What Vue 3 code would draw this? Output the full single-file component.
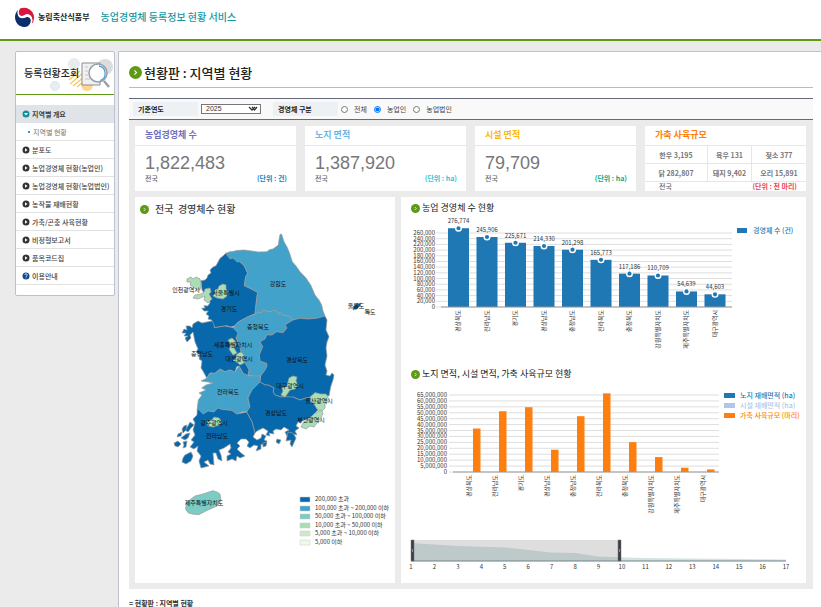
<template>
  <div class="page">
    <header class="top">
      <a href="#" class="logo">
        <svg class="emblem" viewBox="0 0 20 20">
          <path d="M5 1.500A10 10 0 0 1 16.500 17.300C18.500 13 17 9.300 13.500 8.300C10 7.300 9 10 6.300 9.600C3.500 9.200 2.600 6 4 3.500C4.300 2.800 4.600 2.100 5 1.500Z" fill="#d9163f" />
          <path d="M3.200 2.700C1.500 6 3 10.800 6.800 11.300C10 11.600 10.800 9.300 13.500 10.300C17 11.600 16.500 16.500 12.300 19.600C5.500 21.500 0 16.500 0 10C0 7 1.300 4.500 3.200 2.700Z" fill="#0b2f6b" />
          <path d="M5 1.500C2.500 5 4 9 7 9C9.500 9 10.500 6.300 13.500 7.300C17.500 8.600 18.500 13.500 16 17.500L14.500 18.600C17.300 14.500 16.500 11 13.300 9.900C10.500 9 9.600 11.400 6.700 11C3.200 10.400 1.700 6 3.500 2.500Z" fill="#fff" />
        </svg>
        <span>농림축산식품부</span>
      </a>
      <a href="#" class="service">농업경영체 등록정보 현황 서비스</a>
    </header>

    <div class="body">
      <aside class="side">
        <div class="side-head">
          <h1>등록현황조회</h1>
          <svg class="side-art" viewBox="0 0 64 38">
            <circle cx="24" cy="8" r="6" fill="#e8ecef" />
            <circle cx="55" cy="11" r="8" fill="#dcdcdc" />
            <circle cx="5" cy="30" r="4.500" fill="#e6eef2" stroke="#dbe6ec" />
            <path d="M20 20l6-5M19 24l11-9M20 28l13-11M23 30l11-9M27 31l7-6" stroke="#fbc65b" stroke-width="1.300" />
            <circle cx="37" cy="29" r="6" fill="#ffd58a" />
            <path d="M32 7h18v22h-18z" fill="#f1f1f1" stroke="#8b8d90" />
            <path d="M35 11h3M35 15h3M35 19h3M35 23h5" stroke="#c4c4c4" />
            <circle cx="48" cy="17" r="9" fill="#fff" stroke="#9b9ea3" stroke-width="1.500" />
            <path d="M49 10a7.500 7.500 0 0 1 1 14.500" fill="none" stroke="#4ba3dc" stroke-width="1.300" />
            <path d="M54 25l5 6" stroke="#9b9ea3" stroke-width="2.500" />
          </svg>
        </div>
        <nav>
          <ul class="menu">
            <li v-for="item in menu" :key="item.text" :class="item.type">
              <a href="#">
                <svg v-if="item.type !== 'sub'" class="bullet" viewBox="0 0 8 8">
                  <circle cx="4" cy="4" r="3.500" :fill="bulletColor[item.type]" />
                  <path v-if="item.type === 'active'" d="M2 3h4L4 5.500z" fill="#fff" />
                  <path v-else-if="item.type === 'normal'" d="M3 2.200v3.600L5.500 4z" fill="#fff" />
                  <path v-else d="M2.800 3a1.200 1.200 0 1 1 1.600 1.100L4 4.800M4 5.600v.8" fill="none" stroke="#fff" stroke-width=".8" />
                </svg>
                <i v-else class="dot"></i>
                {{ item.text }}
              </a>
            </li>
          </ul>
        </nav>
      </aside>

      <main class="main">
        <h2 class="title">
          <svg class="arrow big" viewBox="0 0 12 12"><circle cx="6" cy="6" r="6" fill="#5f9a13" /><path d="M5 4l2 2-2 2" fill="none" stroke="#fff" /></svg>
          현황판 : 지역별 현황
        </h2>

        <form class="filter" @submit.prevent>
          <label class="tag" for="year">기준연도</label>
          <div class="select-wrap">
            <select id="year" v-model="year">
              <option>2025</option>
              <option>2024</option>
            </select>
            <svg viewBox="0 0 10 6"><path d="M1 1l3 3 3-3M4 1l2.500 3L9 1" fill="none" stroke="#333" stroke-width="1.300" /></svg>
          </div>
          <span id="kind" class="tag second">경영체 구분</span>
          <div class="radios" role="radiogroup" aria-labelledby="kind">
            <label v-for="k in kinds" :key="k">
              <input type="radio" name="kind" :value="k" v-model="kind" />{{ k }}
            </label>
          </div>
        </form>

        <div class="board">
          <div class="cards">
            <section v-for="c in cards" :key="c.name" class="card" :class="c.cls">
              <h3>{{ c.name }}</h3>
              <div class="card-body">
                <strong>{{ c.value }}</strong>
                <p><span>전국</span><b>{{ c.unit }}</b></p>
              </div>
            </section>
            <section class="card livestock">
              <h3>가축 사육규모</h3>
              <table>
                <tbody>
                  <tr v-for="(row, i) in livestock" :key="i">
                    <td v-for="cell in row" :key="cell">{{ cell }}</td>
                  </tr>
                </tbody>
              </table>
              <p><span>전국</span><b>(단위 : 천 마리)</b></p>
            </section>
          </div>

          <div class="panels">
            <section class="panel">
              <h3 class="map-title">
                <svg class="arrow" viewBox="0 0 12 12"><circle cx="6" cy="6" r="6" fill="#5f9a13" /><path d="M5 4l2 2-2 2" fill="none" stroke="#fff" /></svg>
                전국&nbsp; 경영체수 현황
              </h3>
              <svg class="chart" viewBox="135 221 260 356">
                <path v-for="(r, i) in regions" :key="i" :d="r.d" :fill="r.fill" stroke="#999" stroke-width=".7" stroke-linejoin="round" />
                <text v-for="l in mapLabels" :key="l[0]" :x="l[1]" :y="l[2]" class="map-label">{{ l[0] }}</text>
                <g v-for="(l, i) in mapLegend" :key="l.text">
                  <rect x="300" :y="497 + Math.round(i * 8.5)" width="10" height="5" :fill="l.color" stroke="#ccc" stroke-width=".5" />
                  <text x="315" :y="501 + Math.round(i * 8.5)" class="tick">{{ l.text }}</text>
                </g>
              </svg>
            </section>

            <section class="panel right">
              <h3>
                <svg class="arrow" viewBox="0 0 12 12"><circle cx="6" cy="6" r="6" fill="#5f9a13" /><path d="M5 4l2 2-2 2" fill="none" stroke="#fff" /></svg>
                농업 경영체 수 현황
              </h3>
              <svg class="chart" viewBox="401 217 405 146">
                <g v-for="n in 14" :key="n">
                  <line x1="436" x2="732" :y1="y1((n - 1) * 20000)" :y2="y1((n - 1) * 20000)" stroke="#dedede" />
                  <text x="435" :y="y1((n - 1) * 20000) + 2" class="tick end">{{ ((n - 1) * 20000).toLocaleString('en-US') }}</text>
                </g>
                <g v-for="(v, i) in counts" :key="i">
                  <rect :x="448 + i * 28.5" :y="y1(v)" width="21" :height="307 - y1(v)" fill="#1f77b4" />
                  <circle :cx="458.5 + i * 28.5" :cy="y1(v)" r="2.800" fill="#1f77b4" stroke="#fff" stroke-width="1.400" />
                  <text :x="458.5 + i * 28.5" :y="y1(v) - 5" class="tick mid">{{ v.toLocaleString('en-US') }}</text>
                  <text :transform="`translate(${460 + i * 28.5} 310) rotate(-90)`" class="tick end">{{ names[i] }}</text>
                </g>
                <line x1="441" x2="732" y1="307" y2="307" stroke="#999" />
                <rect x="737" y="228" width="10" height="5" fill="#1f77b4" />
                <text x="753" y="233" class="legend" fill="#1f77b4">경영체 수 (건)</text>
              </svg>

              <h3>
                <svg class="arrow" viewBox="0 0 12 12"><circle cx="6" cy="6" r="6" fill="#5f9a13" /><path d="M5 4l2 2-2 2" fill="none" stroke="#fff" /></svg>
                노지 면적, 시설 면적, 가축 사육규모 현황
              </h3>
              <svg class="chart" viewBox="401 383 405 194">
                <g v-for="n in 14" :key="n">
                  <line x1="449" x2="719" :y1="y2((n - 1) * 5)" :y2="y2((n - 1) * 5)" stroke="#dedede" />
                  <text x="447" :y="y2((n - 1) * 5) + 2" class="tick end">{{ ((n - 1) * 5000000).toLocaleString('en-US') }}</text>
                </g>
                <g v-for="(v, i) in animals" :key="i">
                  <rect :x="473 + i * 26" :y="y2(v)" width="7.500" :height="472 - y2(v)" fill="#ff7f0e" />
                  <text :transform="`translate(${471 + i * 26} 475) rotate(-90)`" class="tick end">{{ names[i] }}</text>
                </g>
                <line x1="453" x2="719" y1="472" y2="472" stroke="#999" />
                <g v-for="(l, i) in areaLegend" :key="l.text">
                  <rect x="724" :y="393 + i * 10" width="11" height="5" :fill="l.color" />
                  <text x="740" :y="398 + i * 10" class="legend" :fill="l.color">{{ l.text }}</text>
                </g>

                <path d="M411 543L434 544.500L458 546L505 547.500L529 550L550 552.500L575 553L598 556.500L645 558L692 558.500L786 559.500V561H411Z" fill="#d3e3e4" />
                <rect x="411" y="540" width="210" height="21" fill="#888" fill-opacity=".28" />
                <path d="M411 561H786" stroke="#6f8084" />
                <g v-for="x in [411, 618]" :key="x">
                  <rect :x="x" y="540" width="3" height="21" fill="#3c3f4a" stroke="#777" stroke-width=".5" />
                  <path :d="`M${x + 1.5} 549v3`" stroke="#bbb" stroke-width=".6" />
                </g>
                <text v-for="n in 17" :key="n" :x="411 + (n - 1) * 23.44" y="569" class="tick mid">{{ n }}</text>
              </svg>
            </section>
          </div>
        </div>

        <p class="foot">= 현황판 : 지역별 현황</p>
      </main>
    </div>
  </div>
</template>

<script setup>
import { ref } from 'vue'

const year = ref('2025')
const kind = ref('농업인')
const kinds = ['전체', '농업인', '농업법인']

const bulletColor = { active: '#138f99', normal: '#333', help: '#0b4a94' }
const menu = [
  { text: '지역별 개요', type: 'active' },
  { text: '지역별 현황', type: 'sub' },
  { text: '분포도', type: 'normal' },
  { text: '농업경영체 현황(농업인)', type: 'normal' },
  { text: '농업경영체 현황(농업법인)', type: 'normal' },
  { text: '농작물 재배현황', type: 'normal' },
  { text: '가축/곤충 사육현황', type: 'normal' },
  { text: '비정형보고서', type: 'normal' },
  { text: '품목코드집', type: 'normal' },
  { text: '이용안내', type: 'help' }
]

const cards = [
  { name: '농업경영체 수', value: '1,822,483', unit: '(단위 : 건)', cls: 'farms' },
  { name: '노지 면적', value: '1,387,920', unit: '(단위 : ha)', cls: 'field' },
  { name: '시설 면적', value: '79,709', unit: '(단위 : ha)', cls: 'facility' }
]
const livestock = [
  ['한우 3,195', '육우 131', '젖소 377'],
  ['닭 282,807', '돼지 9,402', '오리 15,891']
]

const names = ['경상북도', '전라남도', '경기도', '경상남도', '충청남도', '전라북도', '충청북도', '강원특별자치도', '제주특별자치도', '대구광역시']
const counts = [276774, 245906, 225671, 214330, 201298, 165773, 117186, 110709, 54639, 44603]
// 백만 마리
const animals = [36.7, 51.3, 54.7, 18.8, 47.1, 66.4, 25.2, 12.6, 3.6, 2.2]
const y1 = (v) => 307 - (v / 260000) * 74
const y2 = (v) => 472 - (v / 65) * 77

const areaLegend = [
  { text: '노지 재배면적 (ha)', color: '#1f77b4' },
  { text: '시설 재배면적 (ha)', color: '#aec7e8' },
  { text: '가축 사육규모 (마리)', color: '#ff7f0e' }
]
const mapLegend = [
  { text: '200,000 초과', color: '#0868ac' },
  { text: '100,000 초과 ~ 200,000 이하', color: '#43a2ca' },
  { text: '50,000 초과 ~ 100,000 이하', color: '#7bccc4' },
  { text: '10,000 초과 ~ 50,000 이하', color: '#a8ddb5' },
  { text: '5,000 초과 ~ 10,000 이하', color: '#ccebc5' },
  { text: '5,000 이하', color: '#f0f9e8' }
]

const navy = '#0868ac'
const blue = '#43a2ca'
const green = '#a8ddb5'
const regions = [
  // 경기도
  { fill: navy, d: 'M225.700 253.300L223 256L220 258.300L218 262L216 265.700L213 267L210 270L211 273L208 275L207 278L205 280L201 280.700L202 290L205 294L209 299L210 303L207.700 306L204 305.500L205 308L201.700 308.300L204 311L208.300 311L206 314L209 316L208 319L211.700 320L213 325L215 327.700L221 326.500L226.700 325.700L231 327L235 325.700L237 323L240 321L247.300 317L255 313.700L256.700 298.300L257.700 292.300L250 288.300L244.300 285.700L245.700 276.700L247.700 273.300L244.300 265.700L240 261.700L233 258L230 255Z' },
  // 강원도
  { fill: blue, d: 'M225.700 253.300L230 251.700L233 251.500L236.700 250.500L244 250L251.700 251L258 252L266.700 251.700L270 249.500L273 249L278.300 245L279 240L280 234.500L281.500 234L284 241.700L287 247L289.300 252.300L292.300 261.700L296 266L300 271.700L306 278L310.700 285L315 295L319 300L321.700 305L323 311L325 316L316.700 318.300L308 319L300 318.300L293 320L290 316.500L286.700 315.700L283 315L280 312.300L278.500 314.500L277 311.500L274 310.300L270 312L266 311L263.300 309.700L261.700 313L258 312L255 314.300L256.700 298.300L257.700 292.300L250 288.300L244.300 285.700L245.700 276.700L247.700 273.300L244.300 265.700L240 261.700L237 262L233 258L230 259Z' },
  // 충청북도
  { fill: blue, d: 'M255 314.300L258 312L261.700 313L263.300 309.700L266 311L270 312L274 310.300L277 311.500L278.500 314.500L280 312.300L283 315L286.700 315.700L290 316.500L293 320L285 325L287 328L283 332.700L276.700 331.700L272 335L266.700 335L265 339L260 341.700L262.700 346.700L259.300 355L260 361L266.700 363.300L267 366L265 370L260.700 376L253.300 376L248.300 375L249 370L247.300 366.700L243 360L240 348L236 338L238 333L233.300 327.700L237 323L240 321L247.300 317Z' },
  // 충청남도
  { fill: navy, d: 'M211.700 321L214 324L214.300 327.700L225 326L233.300 327.700L238 333L236 338L240 348L243 360L247.300 366.700L249 370L247.700 376L243 373.300L239 366L236.700 366.700L235 372L230 370L225 371.700L220 369L215 373.300L210 373L206.700 378L203 371L201 368L202 361L199 359L200 355L196 352L198 349L195 342L193 332L190 335L191 338L187 342L185 338L188 336L184 336L186 333L182 333L184 329L187 330L186 326L190 326L192 328L193 324L198 321L202 323L206.700 322Z' },
  // 전라북도
  { fill: blue, d: 'M206.700 378.300L210 373L215 373.300L220 369L225 371.700L230 370L235 372L239 366L243 373.300L248.300 375.500L253.300 376L260 376L260 383L256 386L252 390L250 394L247.700 398L250 406.700L248 411L242 412L236.700 414L232 410.500L228 410L222 409.500L218 408L214 412L208 411L203 414L199 410L197.300 408L198.300 400L202 395L199 393L206 390L201.700 388L206 385L213 383L208 382L201 381Z' },
  // 경상북도
  { fill: navy, d: 'M293 320L300 318.300L308 319L316.700 318.300L325 316L327 320L326 330L329 336.700L327 342L326 348L327 356L325 365L327 371L326 375L330 376L332 373L334 375L333 380L330.700 386.700L329 396L320 394L315 392.700L312 397L306 398L300 400L293 397L288 399L286.700 396.700L281 397L275 395L273 392L274 388L268 385L265 385L260 382L260.700 376L265 370L267 366L266.700 363.300L260 361L259.300 355L262.700 346.700L260 341.700L265 339L266.700 335L272 335L276.700 331.700L283 332.700L287 328L285 325Z' },
  // 경상남도
  { fill: navy, d: 'M260 382L265 385L268 385L274 388L273 392L275 395L281 397L286.700 396.700L293 397L300 400L306 398L312 397L310 401L315 405L318 410L312 416L308 419L303 420L301 423L298 422L296 426L299 428L295 431L297 435L293 434L292 439L289 438L290 434L287 436L285 432L289 430L284 427L281 430L276 429L273 431L274 434L269 433L270 436L266 435L268 431L263 428L257 431L255 433L252 422L246.700 412L250 406.700L248 398L252 390Z' },
  // 전라남도
  { fill: navy, d: 'M197.300 408L203 414L208 411L214 412L218 408L222 409.500L228 410L232 410.500L236.700 414L246.700 412L252 422L255 433L253 437L257 440L261 438L262 434L266 436L264 440L267 441L265 446L261 444L261 449L256 451L258 446L254 445L250 448L247 446L249 442L246 439L241 439L237 443L240 446L237 449L241 453L245 456L240 458L237 456L236 461L232 459L227 461L227 456L231 454L228 452L231 448L230 444L224 448L219 450L221 455L222 461L218 459L216 453L213 453L214 465L210 464L208 460L204 462L209 466L201 468L199 461L201 456L197 451L198 446L194 449L190 447L194 442L191 440L195 435L193 430L195 423L193 419L197 415Z' },
  // 서해안과 남해안의 섬
  { fill: navy, d: 'M190 422L194 425L191 428L188 432L185 430L188 426Z' },
  { fill: navy, d: 'M184 426L187 425L186 430L183 433L182 429Z' },
  { fill: navy, d: 'M186 434L190 433L188 438L185 440L181 438Z' },
  { fill: navy, d: 'M178 434L182 432L181 436L177 437Z' },
  { fill: navy, d: 'M174 443L178 441L181 444L178 447L175 446Z' },
  { fill: navy, d: 'M183 442L187 441L186 447L183 448L184 445Z' },
  { fill: navy, d: 'M185 455L191 452L193 456L191 461L186 464L182 462L183 458Z' },
  { fill: navy, d: 'M288 432L293 433L296 438L292 447L290 444L291 440L286 441Z' },
  { fill: navy, d: 'M277 439L281 440L279 444L276 442Z' },
  { fill: navy, d: 'M263 443L267 442L266 446L263 447Z' },
  { fill: navy, d: 'M353 307L357 304L361 303L360 306L357 309L353 310Z' },
  { fill: green, d: 'M366 310L369 310L370 313L367 312Z' },
  // 인천, 서울
  { fill: green, d: 'M187 279L191 277L193 279L196 277L200 279L201 284L200 290L196 289L193 287L190 285L191 282L187 282Z' },
  { fill: green, d: 'M205 289L210 288L211 292L209 294L212 299L208 303L204 300L205 296L198 299L193 298L195 295L201 294L204 292Z' },
  { fill: green, d: 'M215 290L218 289L219 286L223 284L226 285L226 289L228 291L227 296L223 299L217 298L213 296L214 294Z' },
  // 세종, 대전, 광주
  { fill: green, d: 'M228 340L232 338L235 341L236 345L234 348L237 353L233 355L231 352L229 349L231 345Z' },
  { fill: green, d: 'M237 354L241 352L244 355L242 359L244 363L240 365L237 362L233 361L236 358Z' },
  { fill: green, d: 'M207 421L212 420L214 417L219 418L222 422L219 425L213 427L208 426Z' },
  // 대구, 울산, 부산
  { fill: green, d: 'M289 378L293 376L297 377L296 381L298 385L295 389L290 390L288 393L285 397L281 395L283 391L282 388L287 386Z' },
  { fill: green, d: 'M310 397L315 392.700L320 394L326 394L329 399L325 404L325 408L321 412L317 409L314 404Z' },
  { fill: green, d: 'M321 410L323 413L321 418L317 423L314 427L310 426L306 429L301 427L303 423L308 420L314 414Z' },
  // 제주
  { fill: '#7bccc4', d: 'M186 506L187 502L195 496L203 494L212.700 490.700L217 492L220 494L221 500.700L217 506L208 510L198.700 514.700L192 514L188 512.700L185.500 509Z' }
]
const mapLabels = [
  ['강원도', 278, 286],
  ['인천광역시', 186, 292],
  ['서울특별시', 226, 295],
  ['경기도', 229, 311],
  ['충청북도', 258, 329],
  ['세종특별자치시', 233, 347],
  ['충청남도', 202, 356],
  ['대전광역시', 239, 361],
  ['경상북도', 297, 362],
  ['대구광역시', 290, 388],
  ['전라북도', 228, 394],
  ['울산광역시', 319, 403],
  ['경상남도', 276, 415],
  ['부산광역시', 311, 422],
  ['광주광역시', 214, 425],
  ['전라남도', 217, 438],
  ['울릉도', 356, 308],
  ['독도', 370, 314],
  ['제주특별자치도', 204, 505]
]
</script>

<style>
body {
  margin: 0;
  background: #ebebeb;
}
</style>

<style scoped>
.page {
  display: flex;
  flex-direction: column;
  min-height: 100vh;
  font-family: "Noto Sans CJK KR", sans-serif;
  font-size: 7px;
  line-height: 10px;
  color: #444;
}
h1, h2, h3, p, ul {
  margin: 0;
  padding: 0;
}
a {
  color: inherit;
  text-decoration: none;
}
svg {
  display: block;
  flex: none;
}
.top {
  display: flex;
  align-items: center;
  gap: 11px;
  height: 33px;
  padding: 0 15px 6px;
  background: #fff;
  border-bottom: 2px solid #5f9a13;
}
.logo {
  display: flex;
  align-items: center;
  gap: 3px;
  font-size: 8px;
  font-weight: 700;
  color: #222;
}
.emblem {
  width: 20px;
  height: 20px;
}
.service {
  font-size: 10px;
  font-weight: 500;
  color: #1398a2;
}
.body {
  flex: 1;
  display: flex;
  gap: 3px;
  padding: 10px 0 0 15px;
}
.side {
  flex: none;
  align-self: flex-start;
  box-sizing: border-box;
  width: 100px;
  padding-bottom: 10px;
  background: #fff;
  border: 1px solid #bcc0d0;
  border-radius: 2px;
}
.side-head {
  position: relative;
  display: flex;
  align-items: center;
  height: 42px;
  padding-left: 8px;
  margin-bottom: 10px;
  border-bottom: 1px solid #5f9a13;
}
.side-head h1 {
  position: relative;
  z-index: 1;
  font-size: 10px;
  font-weight: 500;
  color: #222;
}
.side-art {
  position: absolute;
  right: 0;
  top: 4px;
  width: 64px;
  height: 38px;
}
.menu {
  list-style: none;
}
.menu li {
  border-bottom: 1px solid #e2e2e2;
  font-weight: 500;
  white-space: nowrap;
}
.menu a {
  display: flex;
  align-items: center;
  gap: 2px;
  height: 17px;
  padding-left: 6px;
}
.menu .active {
  background: #e0e4e8;
  border-color: #e0e4e8;
  font-weight: 700;
}
.menu .sub {
  font-weight: 400;
  color: #777;
}
.menu .sub a {
  gap: 3px;
  padding-left: 12px;
}
.dot {
  width: 2px;
  height: 2px;
  background: #3d8fd1;
}
.bullet {
  width: 8px;
  height: 8px;
}
.main {
  flex: 1;
  min-width: 0;
  padding: 0 8px 0 10px;
  background: #fff;
  border-top: 1px solid #bcc0d0;
  border-left: 1px solid #bcc0d0;
  border-radius: 2px 0 0 0;
}
.title {
  box-sizing: border-box;
  display: flex;
  align-items: center;
  gap: 2px;
  height: 36px;
  padding-top: 6px;
  margin-bottom: 10px;
  border-bottom: 1px solid #bbb;
  font-size: 13px;
  font-weight: 500;
  line-height: 20px;
  color: #222;
}
.arrow {
  width: 9px;
  height: 9px;
}
.arrow.big {
  width: 13px;
  height: 13px;
}
.filter {
  display: flex;
  align-items: center;
  height: 20px;
  padding-left: 4px;
  background: #f9f9f9;
  border-top: 1px solid #666a7c;
  border-bottom: 1px solid #666a7c;
}
.tag {
  box-sizing: border-box;
  width: 65px;
  height: 14px;
  padding-left: 5px;
  background: #eef1f4;
  font-weight: 700;
  line-height: 14px;
  color: #222;
}
.second {
  margin-left: 12px;
}
.select-wrap {
  position: relative;
  width: 60px;
  margin-left: 3px;
}
select {
  display: block;
  appearance: none;
  width: 100%;
  height: 10px;
  padding: 0 4px;
  background: #fff;
  border: 1px solid #777;
  border-radius: 0;
  font: 7px "Liberation Sans", sans-serif;
  line-height: 8px;
  color: #333;
}
.select-wrap svg {
  position: absolute;
  right: 3px;
  top: 2px;
  width: 10px;
  height: 6px;
  pointer-events: none;
}
.radios {
  display: flex;
  gap: 7px;
  margin-left: 3px;
}
.radios label {
  display: flex;
  align-items: center;
  gap: 6px;
}
.radios input {
  width: 7px;
  height: 7px;
  margin: 0;
}
.board {
  padding: 6px 7px 6px 6px;
  background: #ebebeb;
}
.cards {
  display: grid;
  grid-template-columns: repeat(4, 1fr);
  gap: 9px;
  margin-bottom: 6px;
}
.card {
  height: 65px;
  background: #fff;
}
.card h3 {
  height: 19px;
  padding-left: 10px;
  border-bottom: 1px solid #e6e6e6;
  font-size: 9px;
  line-height: 18px;
}
.card-body {
  padding: 7px 9px 0 10px;
}
.card strong {
  display: block;
  font: 18px "Liberation Sans", sans-serif;
  line-height: 20px;
  color: #777;
}
.card p {
  display: flex;
  justify-content: space-between;
  font-weight: 500;
  color: #666;
}
.farms h3 { color: #7070c0; }
.farms b { color: #1583c8; }
.field h3 { color: #70b5e5; }
.field b { color: #35c5d5; }
.facility h3 { color: #fdb913; }
.facility b { color: #10a98a; }
.livestock h3 { color: #ff7f0e; }
.livestock b { color: #ee4358; }
.card.livestock p {
  padding: 0 9px 0 14px;
  line-height: 8px;
}
table {
  width: 100%;
  border-collapse: collapse;
  table-layout: fixed;
}
td {
  height: 17px;
  padding: 0;
  border: 1px solid #e6e6e6;
  border-top: 0;
  text-align: center;
  font-weight: 700;
  line-height: 14px;
  color: #777;
}
td:first-child {
  width: 62px;
  border-left: 0;
}
td:last-child {
  width: 54px;
  border-right: 0;
}
.panels {
  display: grid;
  grid-template-columns: 260fr 405fr;
  gap: 6px;
}
.panel {
  min-width: 0;
  padding-bottom: 6px;
  background: #fff;
}
.panel h3 {
  display: flex;
  align-items: center;
  gap: 2px;
  height: 20px;
  padding: 2px 0 0 10px;
  box-sizing: border-box;
  font-size: 9px;
  font-weight: 400;
  color: #222;
}
.panel .map-title {
  gap: 6px;
  height: 24px;
  padding: 0 0 0 5px;
  font-size: 10px;
  font-weight: 500;
  color: #444;
}
.chart {
  width: 100%;
  height: auto;
}
.tick,
.map-label {
  font-size: 6px;
  fill: #333;
}
.map-label {
  fill: #111;
  text-anchor: middle;
}
.end {
  text-anchor: end;
}
.mid {
  text-anchor: middle;
}
.legend {
  font-size: 7px;
  font-weight: 500;
}
.foot {
  padding-top: 9px;
  font-weight: 700;
  color: #333;
}
</style>
